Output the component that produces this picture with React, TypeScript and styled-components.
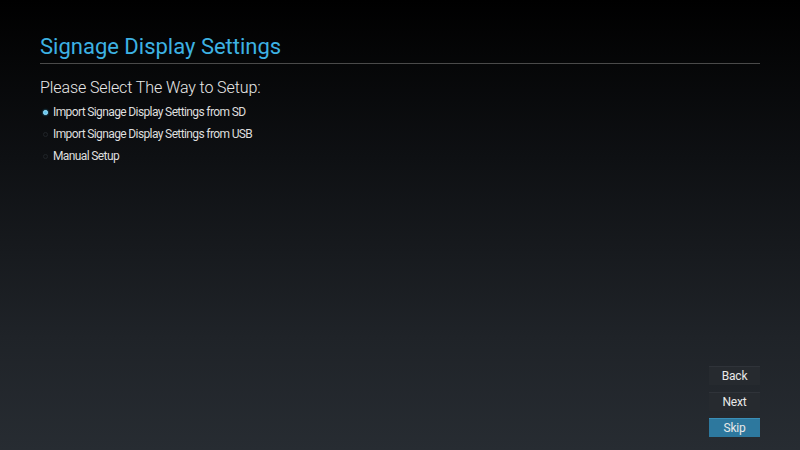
import styled, { createGlobalStyle } from "styled-components";

const GlobalStyle = createGlobalStyle`
  html, body {
    margin: 0;
    padding: 0;
    width: 800px;
    height: 450px;
    overflow: hidden;
  }
  body {
    font-family: Roboto, "Liberation Sans", sans-serif;
  }
`;

const Screen = styled.div`
  width: 800px;
  height: 450px;
  box-sizing: border-box;
  padding: 33px 40px 13px 40px;
  display: flex;
  flex-direction: column;
  background: linear-gradient(180deg, #000000 0%, #0e1013 35%, #1f2328 75%, #272c32 100%);
  color: #e6e6e6;
`;

const Title = styled.h1`
  margin: 0;
  font-size: 22px;
  font-weight: 400;
  line-height: 28px;
  color: #3db2e3;
  padding-bottom: 2px;
  border-bottom: 1px solid #4a4a4a;
`;

const Prompt = styled.div`
  margin-top: 14px;
  font-size: 16px;
  font-weight: 300;
  line-height: 20px;
  letter-spacing: -0.1px;
  color: #e8e8e8;
`;

const Options = styled.div`
  margin-top: 3px;
  display: flex;
  flex-direction: column;
`;

const Option = styled.label`
  display: flex;
  align-items: center;
  height: 22px;
  font-size: 12px;
  letter-spacing: -0.62px;
  color: #dedede;
`;

const Dot = styled.span<{ $checked?: boolean }>`
  width: 5px;
  height: 5px;
  border-radius: 50%;
  margin: 0 5px 0 3px;
  box-sizing: border-box;
  background: ${(p) => (p.$checked ? "#63c6ee" : "transparent")};
  border: 1px solid ${(p) => (p.$checked ? "#9adcf6" : "#202428")};
  box-shadow: ${(p) => (p.$checked ? "0 0 2px #3db2e3" : "none")};
`;

const Spacer = styled.div`
  flex: 1;
`;

const Actions = styled.div`
  display: flex;
  flex-direction: column;
  align-items: flex-end;
  gap: 7px;
`;

const Button = styled.button<{ $primary?: boolean }>`
  width: 51px;
  height: 19px;
  padding: 0;
  border: none;
  border-top: 1px solid ${(p) => (p.$primary ? "#3a8fb8" : "#2f3339")};
  font-family: inherit;
  font-size: 12px;
  letter-spacing: -0.2px;
  color: #e8e8e8;
  background: ${(p) => (p.$primary ? "#2d789e" : "#262a2f")};
`;

const options = [
  { label: "Import Signage Display Settings from SD", checked: true },
  { label: "Import Signage Display Settings from USB", checked: false },
  { label: "Manual Setup", checked: false },
];

const App = () => {
  return (
    <>
      <GlobalStyle />
      <Screen>
        <Title>Signage Display Settings</Title>
        <Prompt>Please Select The Way to Setup:</Prompt>
        <Options>
          {options.map((o) => (
            <Option key={o.label}>
              <Dot $checked={o.checked} />
              {o.label}
            </Option>
          ))}
        </Options>
        <Spacer />
        <Actions>
          <Button>Back</Button>
          <Button>Next</Button>
          <Button $primary>Skip</Button>
        </Actions>
      </Screen>
    </>
  );
};

export default App;
